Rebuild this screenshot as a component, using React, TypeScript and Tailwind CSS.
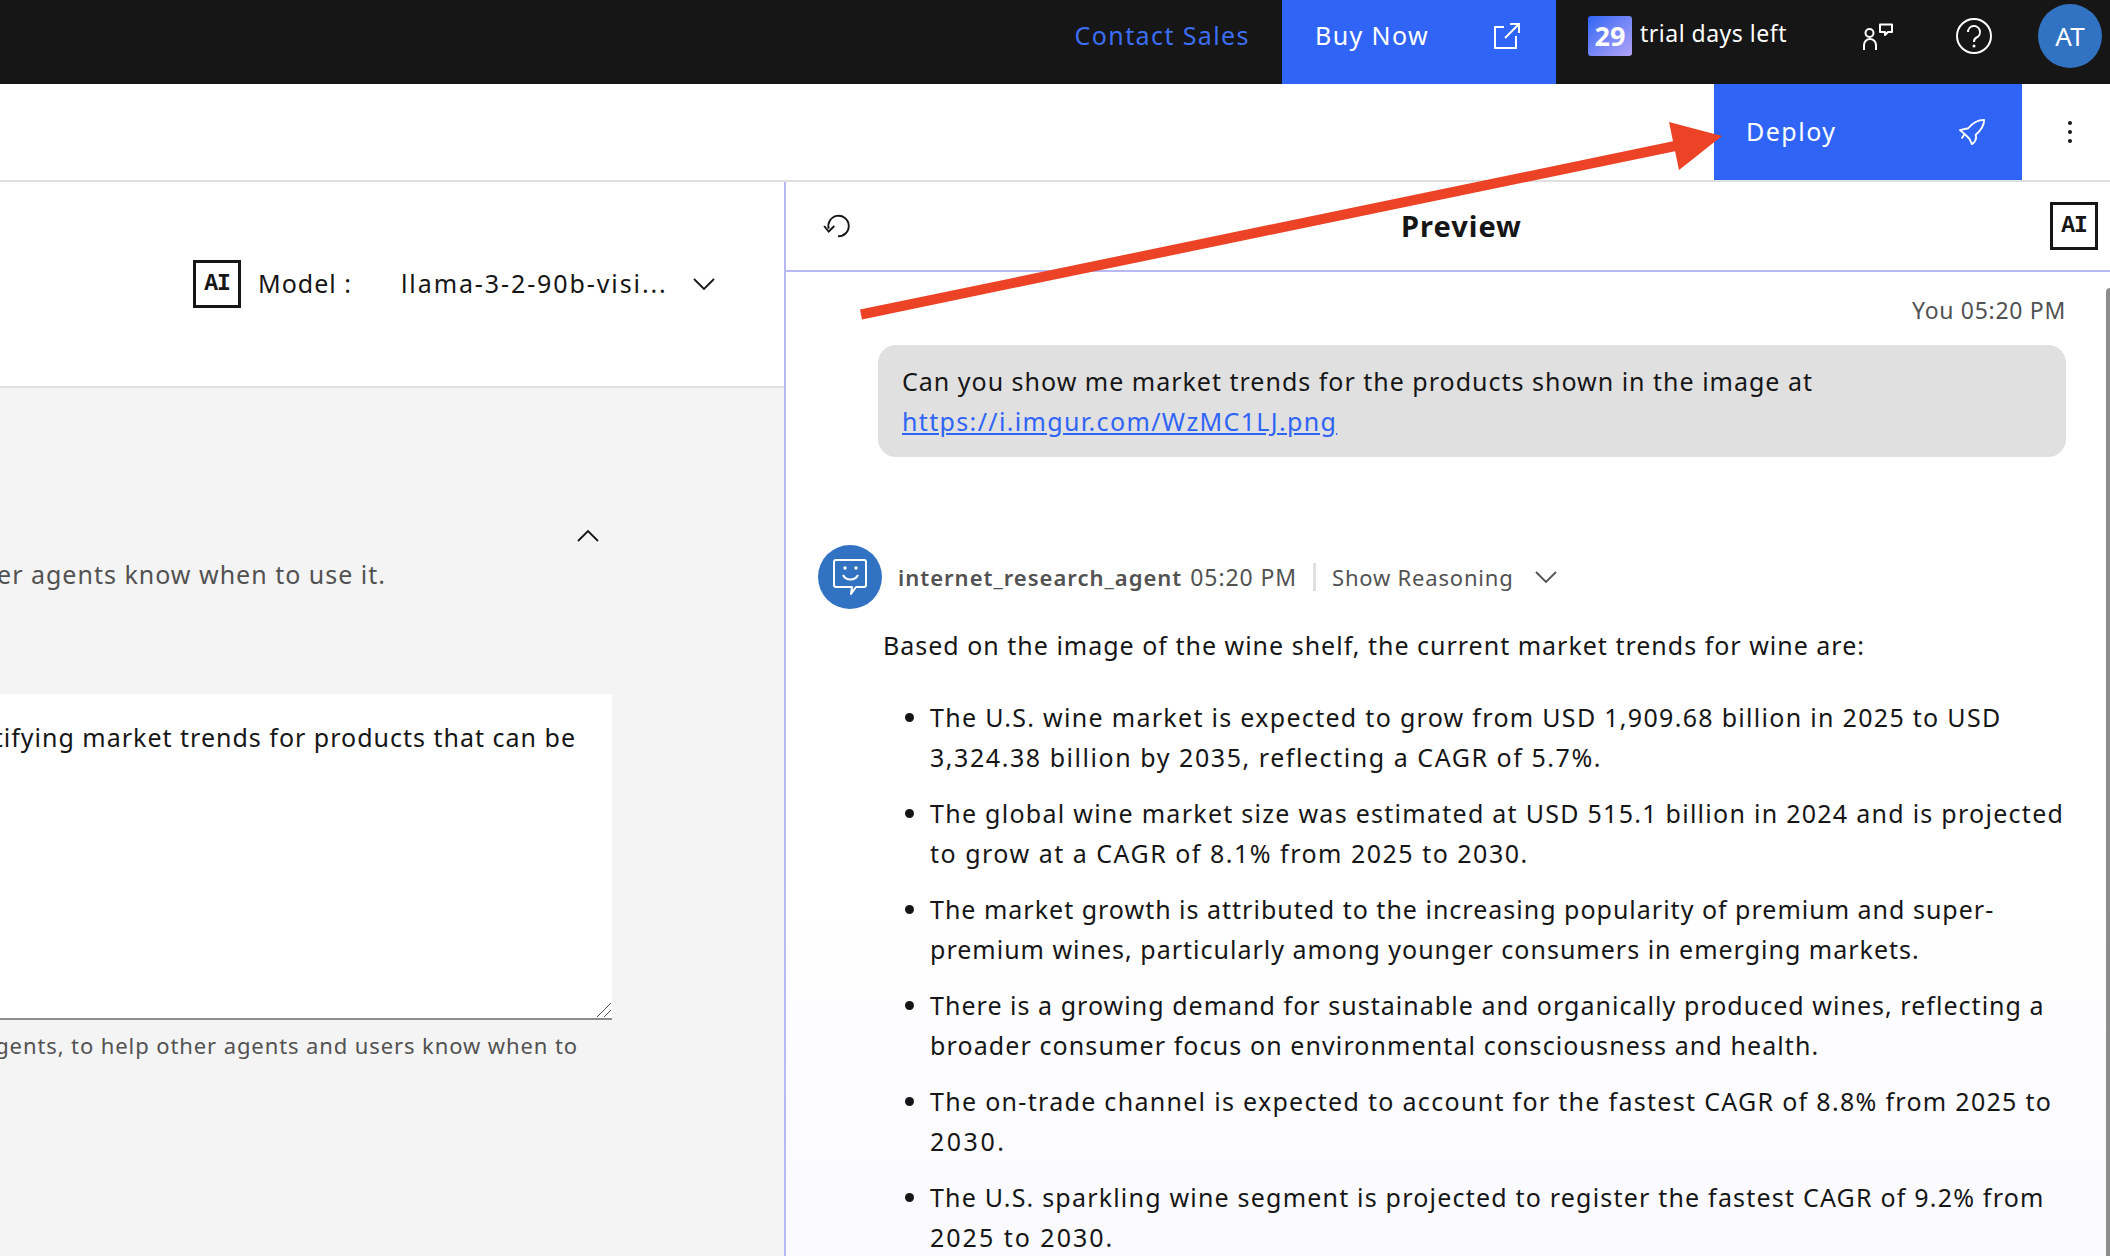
const bullets = [
  [
    { text: "The U.S. wine market is expected to grow from USD 1,909.68 billion in 2025 to USD", track: "tracking-[1.3px]" },
    { text: "3,324.38 billion by 2035, reflecting a CAGR of 5.7%.", track: "tracking-[1.55px]" },
  ],
  [
    { text: "The global wine market size was estimated at USD 515.1 billion in 2024 and is projected", track: "tracking-[1.27px]" },
    { text: "to grow at a CAGR of 8.1% from 2025 to 2030.", track: "tracking-[1.5px]" },
  ],
  [
    { text: "The market growth is attributed to the increasing popularity of premium and super-", track: "tracking-[1px]" },
    { text: "premium wines, particularly among younger consumers in emerging markets.", track: "tracking-[1px]" },
  ],
  [
    { text: "There is a growing demand for sustainable and organically produced wines, reflecting a", track: "tracking-[1.03px]" },
    { text: "broader consumer focus on environmental consciousness and health.", track: "tracking-[1.1px]" },
  ],
  [
    { text: "The on-trade channel is expected to account for the fastest CAGR of 8.8% from 2025 to", track: "tracking-[1.3px]" },
    { text: "2030.", track: "tracking-[2.5px]" },
  ],
  [
    { text: "The U.S. sparkling wine segment is projected to register the fastest CAGR of 9.2% from", track: "tracking-[1.2px]" },
    { text: "2025 to 2030.", track: "tracking-[2px]" },
  ],
];

function AiBadge() {
  return (
    <div className="flex h-12 w-12 shrink-0 items-center justify-center border-[3px] border-[#161616] font-['Liberation_Mono',monospace] text-[23px] font-bold tracking-[-1px] text-[#161616]">
      AI
    </div>
  );
}

function Chevron({ up = false }: { up?: boolean }) {
  return (
    <svg width="24" height="24" viewBox="0 0 24 24" fill="none" stroke="currentColor" strokeWidth="1.8">
      <path d={up ? "M2 17 L12 7 L22 17" : "M2 7 L12 17 L22 7"} />
    </svg>
  );
}

export default function App() {
  return (
    <div className="relative flex h-[1256px] w-[2110px] flex-col overflow-hidden bg-white font-['Noto_Sans',sans-serif] text-[25px] tracking-[1px] text-[#161616]">
      <header className="flex h-[84px] shrink-0 items-stretch justify-end bg-[#161616] text-white">
        <div className="flex items-center pb-3 pr-8 tracking-[1.4px] text-[#3b6ef2]">Contact Sales</div>
        <div className="flex w-[274px] items-center justify-between bg-[#2f64f6] pb-3 pl-[33px] pr-9">
          <span className="tracking-[1.4px]">Buy Now</span>
          <svg width="26" height="26" viewBox="0 0 26 26" fill="none" stroke="white" strokeWidth="2">
            <path d="M10 4 H1 V25 H22 V13" />
            <path d="M11 15 L25 1 M16 1 H25 V10" />
          </svg>
        </div>
        <div className="flex items-center pb-3 pl-8">
          <span className="flex h-10 w-[44px] items-center justify-center rounded-[3px] bg-gradient-to-br from-[#2f64f6] to-[#b2a2f5] text-[27px] font-bold tracking-normal">29</span>
          <span className="mb-[6px] ml-2 w-[147px] whitespace-nowrap text-[23px] tracking-[0.5px]">trial days left</span>
        </div>
        <div className="ml-[76px] flex items-center pb-[11px]">
          <svg width="30" height="27" viewBox="0 0 30 27" fill="none" stroke="white" strokeWidth="2">
            <circle cx="6.5" cy="10" r="4" />
            <path d="M1 27 V22 A6 6 0 0 1 13 22 V27" />
            <path d="M17 1.5 H29 V9 H25 L22 12 V9 H17 Z" strokeLinejoin="round" />
          </svg>
        </div>
        <div className="ml-[63px] flex items-center pb-3">
          <svg width="36" height="36" viewBox="0 0 36 36" fill="none" stroke="white" strokeWidth="2">
            <circle cx="18" cy="18" r="17" />
            <path d="M12 14 A6 6 0 1 1 20.5 19.5 C18.5 20.5 18 21.5 18 24" />
            <circle cx="18" cy="28" r="1.5" fill="white" stroke="none" />
          </svg>
        </div>
        <div className="ml-[46px] mr-2 mt-1 flex h-16 w-16 items-center justify-center rounded-full bg-[#3272c2] text-[26px] tracking-normal">AT</div>
      </header>

      <div className="flex h-[98px] shrink-0 justify-end border-b-2 border-[#e0e0e0]">
        <div className="flex h-[96px] w-[308px] items-center justify-between bg-[#2f64f6] pl-8 pr-9 text-white">
          <span className="tracking-[1.5px]">Deploy</span>
          <svg width="28" height="28" viewBox="0 0 30 30" fill="none" stroke="white" strokeWidth="2">
            <path d="M28 2 C20 2 15 6 11 11 L2 13 L7 17 L12 22 L15 28 C18 26 20 22 19 18 C25 13 28 8 28 2 Z" strokeLinejoin="round" />
            <path d="M7 17 L4 22" />
          </svg>
        </div>
        <div className="flex w-[88px] flex-col items-center justify-center gap-[5px] pl-2">
          <span className="h-1 w-1 rounded-full bg-[#161616]" />
          <span className="h-1 w-1 rounded-full bg-[#161616]" />
          <span className="h-1 w-1 rounded-full bg-[#161616]" />
        </div>
      </div>

      <div className="flex flex-1 overflow-hidden">
        <aside className="flex w-[786px] shrink-0 flex-col overflow-hidden border-r-2 border-[#b8b8f5]">
          <div className="flex h-[206px] shrink-0 items-center justify-end border-b-2 border-[#e0e0e0] pr-[68px]">
            <AiBadge />
            <span className="ml-[17px] w-[143px] whitespace-nowrap">Model :</span>
            <span className="w-[291px] whitespace-nowrap tracking-[1.9px]">llama-3-2-90b-visi...</span>
            <Chevron />
          </div>
          <div className="relative flex-1 bg-[#f4f4f4]">
            <div className="flex justify-end whitespace-nowrap pr-[398px] pt-[166px] leading-[40px] text-[#525252]">
              er agents know when to use it.
            </div>
            <div className="absolute right-[184px] top-[136px] text-[#161616]">
              <Chevron up />
            </div>
            <div className="relative mr-[172px] mt-[100px] flex h-[326px] justify-end overflow-hidden whitespace-nowrap border-b-2 border-[#8d8d8d] bg-white pr-9 pt-[23px] leading-[40px]">
              tifying market trends for products that can be
              <svg className="absolute bottom-0 right-0" width="16" height="16" viewBox="0 0 16 16" stroke="#555" fill="none">
                <path d="M1 15 L15 1 M8 15 L15 8" />
              </svg>
            </div>
            <div className="mr-[172px] mt-[11px] flex justify-end overflow-hidden whitespace-nowrap pr-[34px] text-[22px] leading-[28px] tracking-[0.9px] text-[#525252]">
              gents, to help other agents and users know when to
            </div>
          </div>
        </aside>

        <main className="relative flex flex-1 flex-col overflow-hidden">
          <div className="relative flex h-[90px] shrink-0 items-center justify-between border-b-2 border-[#b8b8f5] pl-[37px] pr-3">
            <svg width="30" height="26" viewBox="0 0 32 28" fill="none" stroke="#161616" strokeWidth="2">
              <path d="M6 17 A11 11 0 1 1 16 25" />
              <path d="M1 14 L6 20 L12 14" />
            </svg>
            <h2 className="pl-5 text-[29px] font-bold">Preview</h2>
            <AiBadge />
          </div>

          <div className="flex-1 overflow-hidden bg-gradient-to-b from-white from-60% to-[#fafaff] pl-8 pr-[44px]">
            <div className="mt-[22px] text-right text-[23px] leading-[33px] tracking-[0.7px] text-[#525252]">You 05:20 PM</div>
            <div className="ml-[60px] mt-[18px] rounded-[18px] bg-[#e0e0e0] px-6 py-[16px] leading-[40px]">
              <div>Can you show me market trends for the products shown in the image at</div>
              <a className="tracking-[1.35px] text-[#2f64f6] underline">https://i.imgur.com/WzMC1LJ.png</a>
            </div>

            <div className="mt-[88px] flex items-center">
              <div className="flex h-16 w-16 shrink-0 items-center justify-center rounded-full bg-[#3272c2]">
                <svg width="34" height="36" viewBox="0 0 34 36" fill="none" stroke="white" strokeWidth="2">
                  <path d="M3 1 H31 Q33 1 33 3 V26 Q33 28 31 28 H23 L18 35 L19 28 H3 Q1 28 1 26 V3 Q1 1 3 1 Z" strokeLinejoin="round" />
                  <circle cx="12" cy="9" r="1.7" fill="white" stroke="none" />
                  <circle cx="23" cy="9" r="1.7" fill="white" stroke="none" />
                  <path d="M10 16 C13 22 22 22 25 16" />
                </svg>
              </div>
              <span className="ml-4 whitespace-nowrap text-[22px] font-semibold tracking-[1px] text-[#525252]">internet_research_agent</span>
              <span className="ml-2 whitespace-nowrap text-[23px] tracking-[0.9px] text-[#525252]">05:20 PM</span>
              <span className="mx-4 h-7 w-[3px] bg-[#e0e0e0]" />
              <span className="whitespace-nowrap text-[22px] tracking-[0.8px] text-[#525252]">Show Reasoning</span>
              <span className="ml-[21px] text-[#525252]">
                <Chevron />
              </span>
            </div>

            <div className="ml-[65px] mt-[16px] leading-[40px]">
              Based on the image of the wine shelf, the current market trends for wine are:
            </div>

            <ul className="ml-[112px] mt-[32px] list-disc leading-[40px]">
              {bullets.map((lines, i) => (
                <li key={i} className="mb-4 whitespace-nowrap">
                  {lines.map((line) => (
                    <div key={line.text} className={line.track}>{line.text}</div>
                  ))}
                </li>
              ))}
            </ul>
          </div>
          {/* scrollbar thumb */}
          <div className="absolute bottom-0 right-0 top-[106px] w-1 rounded-tl-[4px] bg-[#8d8d8d]" />
        </main>
      </div>

      {/* red annotation arrow */}
      <svg className="pointer-events-none absolute left-0 top-0" width="2110" height="1256">
        <line x1="861" y1="314.5" x2="1680" y2="145" stroke="#ec4225" strokeWidth="10" />
        <polygon points="1669,122 1722,136 1679,170" fill="#ec4225" />
      </svg>
    </div>
  );
}
